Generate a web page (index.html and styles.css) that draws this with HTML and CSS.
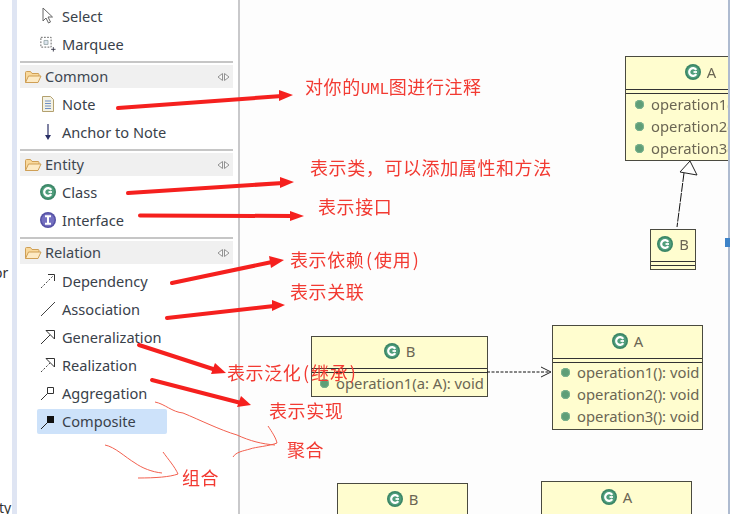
FILE: index.html
```html
<!DOCTYPE html>
<html lang="zh">
<head>
<meta charset="utf-8">
<title>UML palette</title>
<link rel="stylesheet" href="styles.css">
</head>
<body>
<svg class="defs" width="0" height="0" aria-hidden="true">
  <defs>
    <symbol id="folder" viewBox="0 0 18 14">
      <path d="M1.500 12.500V2.500q0-1 1-1h4l1.500 2h6q1 0 1 1v1.500" fill="#f9d99c" stroke="#cf9f55"/>
      <path d="M1.500 12.500l3-6.500h12.500l-3 6.500z" fill="#fdeac4" stroke="#cf9f55"/>
    </symbol>
    <symbol id="collapse" viewBox="0 0 13 10">
      <path d="M5.500 1.500L1 5l4.500 3.500zM7.500 1.500L12 5 7.500 8.500z" fill="#f8f8f8" stroke="#929292"/>
    </symbol>
    <symbol id="cclass" viewBox="0 0 16 16">
      <circle cx="8" cy="8" r="8" fill="#3a8566"/>
      <circle cx="8" cy="8" r="6.500" fill="#4f9d7b"/>
      <path d="M11.300 5.800A3.900 3.900 0 1 0 11.300 10.200" fill="none" stroke="#fff" stroke-width="2.200"/>
      <path d="M8.500 8h3.500" stroke="#fff" stroke-width="1.800"/>
    </symbol>
    <symbol id="iface" viewBox="0 0 16 16">
      <circle cx="8" cy="8" r="8" fill="#5450a4"/>
      <circle cx="8" cy="8" r="6.500" fill="#7470c0"/>
      <path d="M5 4.300h6M5 11.700h6M8 4.300v7.400" fill="none" stroke="#fff" stroke-width="2"/>
    </symbol>
    <symbol id="dep" viewBox="0 0 16 16">
      <path d="M1 15L13 3" stroke="#444" stroke-dasharray="2 1.600" fill="none"/>
      <path d="M8 1.500h6.500v6.500" stroke="#333" fill="none"/>
    </symbol>
    <symbol id="assoc" viewBox="0 0 16 16"><path d="M1 15L15 1" stroke="#444" fill="none"/></symbol>
    <symbol id="gen" viewBox="0 0 16 16">
      <path d="M1 15L11 5" stroke="#333" fill="none"/>
      <path d="M6 1.500h8.500v8.500z" fill="#fff" stroke="#333"/>
    </symbol>
    <symbol id="real" viewBox="0 0 16 16">
      <path d="M1 15L11 5" stroke="#444" stroke-dasharray="2 1.600" fill="none"/>
      <path d="M6 1.500h8.500v8.500z" fill="#fff" stroke="#333"/>
    </symbol>
    <symbol id="aggr" viewBox="0 0 16 16">
      <path d="M1 15L8 8" stroke="#333" fill="none"/>
      <path d="M7.500 2.500h6v6h-6z" fill="#fff" stroke="#333"/>
    </symbol>
    <symbol id="comp" viewBox="0 0 16 16">
      <path d="M1 15L8 8" stroke="#222" fill="none"/>
      <path d="M7 2h7v7H7z" fill="#111"/>
    </symbol>
  </defs>
</svg>

<div class="page">
  <div class="gutter">
    <span class="gutter-text gutter-or">or</span>
    <span class="gutter-text gutter-ty">ty</span>
  </div>
  <aside class="palette">
    <div class="items">
      <div class="item">
        <svg class="icon" viewBox="0 0 16 18"><path d="M3 1v13l3-3 2.500 5 2-1-2.500-5h4.500z" fill="#fff" stroke="#666"/></svg>
        <span>Select</span>
      </div>
      <div class="item">
        <svg class="icon" viewBox="0 0 18 18"><path d="M1 1.500h11.500v11H1z" fill="none" stroke="#555" stroke-dasharray="2 1.500"/><path d="M4.500 5h4.500v4.500H4.500z" fill="#dfe6f0" stroke="#9aa"/><path d="M15 12.500v5M12.500 15h5" stroke="#334" fill="none"/></svg>
        <span>Marquee</span>
      </div>
    </div>

    <section class="drawer">
      <header class="drawer-head"><svg class="folder"><use href="#folder"/></svg><span class="drawer-title">Common</span><svg class="collapse"><use href="#collapse"/></svg></header>
      <div class="items">
        <div class="item">
          <svg class="icon" viewBox="0 0 16 18"><path d="M2.500 1.500h8l3 3v12h-11z" fill="#f4f2e4" stroke="#b3a06e"/><path d="M5 6h6M5 8.500h6M5 11h6M5 13.500h6" stroke="#6f8fc4"/></svg>
          <span>Note</span>
        </div>
        <div class="item">
          <svg class="icon" viewBox="0 0 16 18"><path d="M8 1v14" stroke="#2a2f66" stroke-width="1.200"/><path d="M5 12l3 5 3-5z" fill="#2a2f66"/></svg>
          <span>Anchor to Note</span>
        </div>
      </div>
    </section>

    <section class="drawer">
      <header class="drawer-head"><svg class="folder"><use href="#folder"/></svg><span class="drawer-title">Entity</span><svg class="collapse"><use href="#collapse"/></svg></header>
      <div class="items">
        <div class="item"><svg class="icon"><use href="#cclass"/></svg><span>Class</span></div>
        <div class="item"><svg class="icon"><use href="#iface"/></svg><span>Interface</span></div>
      </div>
    </section>

    <section class="drawer">
      <header class="drawer-head"><svg class="folder"><use href="#folder"/></svg><span class="drawer-title">Relation</span><svg class="collapse"><use href="#collapse"/></svg></header>
      <div class="items items-relation">
        <div class="item"><svg class="icon"><use href="#dep"/></svg><span>Dependency</span></div>
        <div class="item"><svg class="icon"><use href="#assoc"/></svg><span>Association</span></div>
        <div class="item"><svg class="icon"><use href="#gen"/></svg><span>Generalization</span></div>
        <div class="item"><svg class="icon"><use href="#real"/></svg><span>Realization</span></div>
        <div class="item"><svg class="icon"><use href="#aggr"/></svg><span>Aggregation</span></div>
        <div class="item item-selected"><svg class="icon"><use href="#comp"/></svg><span>Composite</span></div>
      </div>
    </section>
  </aside>

  <main class="canvas">
    <div class="uml uml-a-top">
      <div class="uml-title"><svg class="uml-icon"><use href="#cclass"/></svg><span>A</span></div>
      <div class="uml-ops">
        <div class="op"><i class="dot"></i>operation1(): void</div>
        <div class="op"><i class="dot"></i>operation2(): void</div>
        <div class="op"><i class="dot"></i>operation3(): void</div>
      </div>
    </div>
    <div class="uml uml-b-small">
      <div class="uml-title"><svg class="uml-icon"><use href="#cclass"/></svg><span>B</span></div>
      <div class="uml-ops"></div>
    </div>
    <div class="uml uml-b-mid">
      <div class="uml-title"><svg class="uml-icon"><use href="#cclass"/></svg><span>B</span></div>
      <div class="uml-ops">
        <div class="op"><i class="dot"></i>operation1(a: A): void</div>
      </div>
    </div>
    <div class="uml uml-a-mid">
      <div class="uml-title"><svg class="uml-icon"><use href="#cclass"/></svg><span>A</span></div>
      <div class="uml-ops">
        <div class="op"><i class="dot"></i>operation1(): void</div>
        <div class="op"><i class="dot"></i>operation2(): void</div>
        <div class="op"><i class="dot"></i>operation3(): void</div>
      </div>
    </div>
    <div class="uml uml-b-bottom">
      <div class="uml-title"><svg class="uml-icon"><use href="#cclass"/></svg><span>B</span></div>
    </div>
    <div class="uml uml-a-bottom">
      <div class="uml-title"><svg class="uml-icon"><use href="#cclass"/></svg><span>A</span></div>
    </div>
  </main>

  <div class="edge"><i class="edge-mark"></i></div>

  <svg class="overlay" width="730" height="514" viewBox="0 0 730 514" aria-hidden="true">
    <!-- connectors -->
    <path d="M684 173L677 227" stroke="#111" stroke-dasharray="9 1" fill="none"/>
    <path d="M690 161L680 172 697 175z" fill="#fff" stroke="#222"/>
    <path d="M487 372H549" stroke="#111" stroke-dasharray="3 1.500" fill="none"/>
    <path d="M541 367L551 372 541 377" stroke="#222" fill="none"/>
    <!-- thick arrows -->
    <g class="thick-lines" fill="none" stroke="#f5201e" stroke-width="4" stroke-linecap="round">
      <path d="M118 108L282 96"/>
      <path d="M128 193L283 183"/>
      <path d="M140 215.500L293 216"/>
      <path d="M172 283L272 262"/>
      <path d="M167 318L274 306"/>
      <path d="M139 345L216 370"/>
      <path d="M152 380L241 403"/>
    </g>
    <g fill="#f5201e">
      <path d="M279 90L293 95 279 101z"/>
      <path d="M280 177L294 182 280 188z"/>
      <path d="M290 211L304 216 290 221z"/>
      <path d="M269 256L284 260 271 268z"/>
      <path d="M272 300L285 305 272 311z"/>
      <path d="M215 363L226 373 211 374z"/>
      <path d="M241 396L251 405 237 407z"/>
    </g>
    <!-- hand-drawn strokes -->
    <g fill="none" stroke="#f2604f" stroke-width="1">
      <path d="M155 402C165 404 172 412 183 413C200 420 220 430 237 435C250 441 262 444 275 445"/>
      <path d="M268 426C272 432 276 438 277 443C270 446 255 447 250 449C243 451 236 452 233 457"/>
      <path d="M105 445C115 447 125 457 135 463C142 468 152 472 162 473"/>
      <path d="M163 452C168 459 175 467 178 474C170 477 155 478 138 478"/>
    </g>
  </svg>

  <div class="notes">
    <span class="note note-uml">对你的<span class="note-latin">UML</span>图进行注释</span>
    <span class="note note-class">表示类，可以添加属性和方法</span>
    <span class="note note-iface">表示接口</span>
    <span class="note note-dep">表示依赖<span class="paren">(</span>使用<span class="paren">)</span></span>
    <span class="note note-assoc">表示关联</span>
    <span class="note note-gen">表示泛化<span class="paren">(</span>继承<span class="paren">)</span></span>
    <span class="note note-real">表示实现</span>
    <span class="note note-aggr">聚合</span>
    <span class="note note-comp">组合</span>
  </div>
</div>
</body>
</html>
```
FILE: styles.css
```css
* { box-sizing: border-box; }
html, body { margin: 0; padding: 0; background: #fff; }
body { width: 730px; height: 514px; overflow: hidden; }
.defs { position: absolute; }

.page {
  position: relative;
  display: flex;
  width: 730px;
  height: 514px;
  overflow: hidden;
  font-family: "Noto Sans", "Liberation Sans", sans-serif;
  font-size: 14.6px;
  color: #39414a;
  filter: blur(0.35px);
}

/* left strip of the neighbouring view */
.gutter {
  position: relative;
  flex: 0 0 17px;
  background: #fff;
  border-right: 5px solid #dfe5f3;
}
.gutter-text { position: absolute; font-size: 14px; line-height: 16px; color: #333; }
.gutter-or { left: -6px; top: 265px; }
.gutter-ty { left: -1px; top: 500px; }

/* palette */
.palette {
  flex: 0 0 223px;
  padding: 2px 5px 0 3px;
  background: #fff;
  border-right: 2px solid #c9c9cb;
}
.items { display: flex; flex-direction: column; padding-top: 2px; }
.palette > .items:first-child { padding-top: 0; }
.items-relation { padding-top: 3px; }
.item {
  display: flex;
  align-items: center;
  height: 28px;
  padding-left: 20px;
}
.item span { margin: 0 0 1px 6px; }
.icon { width: 16px; height: 18px; flex: none; }
.item-selected {
  width: 130px;
  height: 25px;
  margin: 2px 0 1px 17px;
  padding-left: 3px;
  border-radius: 2px;
  background: #cde2fa;
}

.drawer { margin-top: 3px; border-top: 2px solid #c6c6c6; padding-top: 2px; }
.drawer-head {
  display: flex;
  align-items: center;
  height: 23px;
  padding: 0 3px 0 4px;
  background: #f0f0f0;
}
.folder { width: 18px; height: 14px; flex: none; }
.drawer-title { margin: 0 0 2px 3px; flex: 1; color: #3d4750; }
.collapse { width: 13px; height: 10px; flex: none; }

/* diagram canvas */
.canvas { position: relative; flex: 1; background: #fdfdfd; }
.uml {
  position: absolute;
  display: flex;
  flex-direction: column;
  background: #fffdcf;
  border: 1px solid #4a4a40;
  font-size: 14.8px;
  color: #6b6654;
}
.uml-title {
  display: flex;
  align-items: center;
  justify-content: center;
  gap: 6px;
  flex: none;
  height: 32px;
  padding-bottom: 3px;
}
.uml-icon { width: 16px; height: 16px; flex: none; }
.uml-ops {
  flex: 1;
  min-height: 0;
  display: flex;
  flex-direction: column;
  border-top: 1px solid #333;
  background: linear-gradient(#fffdcf 3px, #333 3px, #333 4px, #fffdcf 4px);
}
.uml-ops .op:first-child { margin-top: 2px; }
.op {
  display: flex;
  align-items: center;
  flex: none;
  height: 22.3px;
  padding: 0 0 1px 8px;
  white-space: nowrap;
}
.dot {
  width: 9px;
  height: 9px;
  margin: 1px 7px 0 0;
  flex: none;
  border-radius: 50%;
  background: #5f9e77;
  box-shadow: inset 0 0 0 1px #7bb28f;
}
.uml-a-top { left: 385px; top: 56px; width: 151px; height: 105px; }
.uml-a-top .op:first-child { margin-top: 3px; }
.uml-a-top .op { padding-left: 9px; }
.uml-b-small { left: 410px; top: 229px; width: 46px; height: 41px; }
.uml-b-small .uml-title { height: 31px; }
.uml-b-mid { left: 71px; top: 336px; width: 177px; height: 61px; }
.uml-b-mid .uml-title { height: 31px; }
.uml-b-mid .op:first-child { margin-top: 3px; }
.uml-a-mid { left: 312px; top: 325px; width: 151px; height: 105px; }
.uml-b-bottom { left: 97px; top: 483px; width: 131px; height: 40px; }
.uml-a-bottom { left: 301px; top: 481px; width: 151px; height: 40px; }

/* right window edge */
.edge { position: relative; flex: 0 0 2px; background: #aebbd0; }
.edge-mark { position: absolute; left: -3px; top: 238px; width: 5px; height: 9px; background: #3d83c8; }

/* annotations drawn over the window */
.overlay { position: absolute; left: 0; top: 0; pointer-events: none; }
.notes { position: absolute; inset: 0; pointer-events: none; }
.note {
  position: absolute;
  font-family: "Noto Sans CJK SC", "Noto Sans", sans-serif;
  font-size: 18px;
  letter-spacing: 0.6px;
  line-height: 24px;
  color: #f23a32;
  white-space: nowrap;
}
.note-latin { font-family: "Liberation Mono", monospace; font-size: 16px; letter-spacing: -0.3px; }
.paren { margin: 0 1.5px; }
.note-uml { left: 305px; top: 74px; }
.note-class { left: 310px; top: 155px; }
.note-iface { left: 318px; top: 194px; }
.note-dep { left: 290px; top: 247px; }
.note-assoc { left: 290px; top: 279px; }
.note-gen { left: 227px; top: 360px; }
.note-real { left: 269px; top: 398px; }
.note-aggr { left: 287px; top: 437px; }
.note-comp { left: 182px; top: 465px; }
```
